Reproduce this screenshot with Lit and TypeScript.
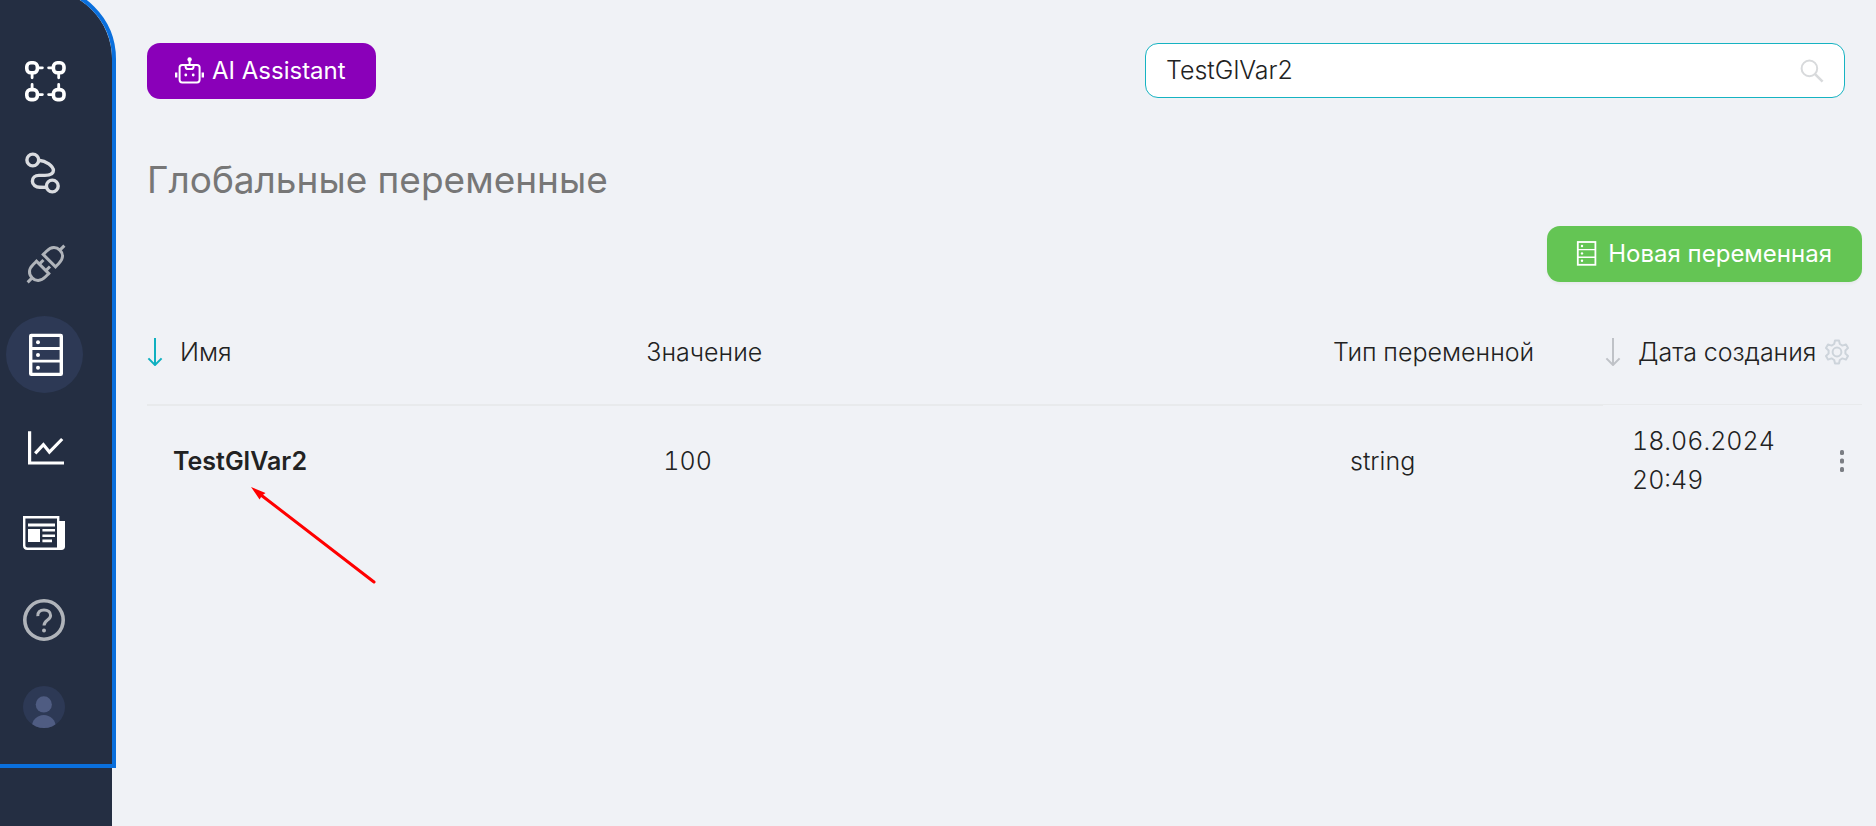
import { LitElement, html, css, svg } from "lit";
import { customElement, property, state } from "lit/decorators.js";
import { classMap } from "lit/directives/class-map.js";

const serverIcon = svg`
  <rect x="9.7" y="4.4" width="30.6" height="39" rx="0.6" fill="none" stroke="currentColor" stroke-width="3.4"></rect>
  <path d="M9 17.5H41M9 30.2H41" fill="none" stroke="currentColor" stroke-width="2.8"></path>
  <circle cx="17" cy="11.2" r="2"></circle>
  <circle cx="17" cy="24" r="2"></circle>
  <circle cx="17" cy="36.8" r="2"></circle>`;

const icons = {
  nodes: svg`
    <g fill="none" stroke="currentColor" stroke-width="3.6" stroke-linecap="round">
      <rect x="5.8" y="4.8" width="10.6" height="10" rx="4"></rect>
      <rect x="32.4" y="4.8" width="10.6" height="10" rx="4"></rect>
      <rect x="5.8" y="31.6" width="10.6" height="10" rx="4"></rect>
      <rect x="32.4" y="31.6" width="10.6" height="10" rx="4"></rect>
    </g>
    <g fill="none" stroke="currentColor" stroke-width="2.8" stroke-linecap="round">
      <path d="M17 9.8H21.4M27.6 9.8H32M17 36.6H21.4M27.6 36.6H32M11.1 16V19.8M37.7 16V19.8M11.1 26.4V31M37.7 26.4V31"></path>
    </g>`,
  route: svg`
    <g fill="none" stroke="currentColor" stroke-width="3.4">
      <circle cx="11.8" cy="11" r="5.9"></circle>
      <circle cx="31.3" cy="37" r="5.9"></circle>
      <path d="M17.8 11.2C25 11.6 32.4 17 32.4 21.6C32.4 25.6 28.4 26.4 24 26.4H18C14 26.4 11.4 28.6 11.4 32.2C11.4 36 15 38.2 18.6 38.2L25.4 38.4"></path>
    </g>`,
  plug: svg`
    <g fill="none" stroke="currentColor" stroke-width="3" transform="translate(25 24) rotate(-45)">
      <path d="M-4.8 -10.2V10.2M-4.8 -8.7H-9.4C-16.4 -8.7 -19.6 -5 -19.6 0C-19.6 5 -16.4 8.7 -9.4 8.7H-4.8M-19.6 0H-26M-4.8 -4.6H1M-4.8 4.6H1"></path>
      <path d="M4.8 -10.2V10.2M4.8 -8.7H9.4C16.4 -8.7 19.6 -5 19.6 0C19.6 5 16.4 8.7 9.4 8.7H4.8M19.6 0H26"></path>
    </g>`,
  server: serverIcon,
  chart: svg`
    <path d="M8.6 8.2V40H43" fill="none" stroke="currentColor" stroke-width="3.2"></path>
    <path d="M14.2 30.4L22.4 21.6L28.4 29L41.2 16" fill="none" stroke="currentColor" stroke-width="3.2"></path>`,
  news: svg`
    <path d="M3.2 7.2H37.2V38.8H6.4Q3.2 38.8 3.2 35.6Z" fill="none" stroke="currentColor" stroke-width="2.4"></path>
    <path d="M37 11H44V36.6Q44 40 40.4 40H37Z"></path>
    <path d="M7 13.6H34V16.4H7ZM7 19H19V32H7ZM21.4 19H34V21.6H21.4ZM21.4 24.4H34V27H21.4ZM21.4 29.6H31V32.2H21.4Z"></path>`,
  help: svg`
    <circle cx="23" cy="23" r="19.2" fill="none" stroke="currentColor" stroke-width="3.6"></circle>
    <path d="M16.8 19.2C16.4 15.2 19 13 23 13C27 13 29.6 15.2 29.6 18.4C29.6 23.2 23 22.8 23 28.6" fill="none" stroke="currentColor" stroke-width="3"></path>
    <circle cx="23" cy="33.4" r="2"></circle>`,
  user: svg`
    <clipPath id="face"><circle cx="23" cy="23" r="21"></circle></clipPath>
    <circle cx="23" cy="23" r="21" fill="#2d3955"></circle>
    <g clip-path="url(#face)" fill="#4f5c82">
      <circle cx="22.8" cy="20.4" r="8.1"></circle>
      <ellipse cx="22.8" cy="43" rx="12" ry="12"></ellipse>
    </g>`,
};

type IconName = keyof typeof icons;

interface NavEntry {
  icon: IconName;
  label: string;
  tone: "bright" | "soft" | "muted";
  active?: boolean;
}

const primary: NavEntry[] = [
  { icon: "nodes", label: "Схемы", tone: "bright" },
  { icon: "route", label: "Маршруты", tone: "soft" },
  { icon: "plug", label: "Подключения", tone: "muted" },
  { icon: "server", label: "Глобальные переменные", tone: "bright", active: true },
];

const secondary: NavEntry[] = [
  { icon: "chart", label: "Статистика", tone: "bright" },
  { icon: "news", label: "Новости", tone: "bright" },
  { icon: "help", label: "Справка", tone: "muted" },
  { icon: "user", label: "Профиль", tone: "bright" },
];

@customElement("side-nav")
export class SideNav extends LitElement {
  static styles = css`
    :host {
      display: block;
      background: #242e42;
      border-top-right-radius: 64px;
    }
    .panel {
      display: flex;
      flex-direction: column;
      gap: 15px;
      margin-top: -11px;
      padding: 54px 0 18px 6px;
      border-top-right-radius: 70px;
      outline: 4px solid #0a6fdc;
      background: #242e42;
    }
    .group {
      display: flex;
      flex-direction: column;
      gap: 14px;
    }
    .tight {
      gap: 10px;
    }
    .item {
      display: flex;
      align-items: center;
      justify-content: center;
      width: 77px;
      height: 77px;
      border-radius: 50%;
      color: #fff;
    }
    .soft {
      color: #dadce0;
    }
    .muted {
      color: #b0b4ba;
    }
    .active {
      background: #2d3955;
    }
    .icon {
      width: 47px;
      height: 47px;
      fill: currentColor;
    }
  `;

  private entry(e: NavEntry) {
    return html`<a
      href="#${e.icon}"
      aria-label=${e.label}
      class=${classMap({ item: true, active: !!e.active, [e.tone]: true })}
      ><svg class="icon" viewBox="0 0 47 47" aria-hidden="true">${icons[e.icon]}</svg></a
    >`;
  }

  render() {
    return html`<nav class="panel">
      <div class="group">${primary.map((e) => this.entry(e))}</div>
      <div class="group tight">${secondary.map((e) => this.entry(e))}</div>
    </nav>`;
  }
}

interface Variable {
  name: string;
  value: string;
  type: string;
  date: string;
  time: string;
}

@customElement("variables-table")
export class VariablesTable extends LitElement {
  @property({ attribute: false }) rows: Variable[] = [];

  static styles = css`
    :host {
      display: block;
    }
    .table {
      width: 100%;
      table-layout: fixed;
      border-collapse: separate;
      border-spacing: 0;
      line-height: 39px;
      font-variant-numeric: tabular-nums;
    }
    .name {
      width: 29%;
    }
    .type {
      width: 270px;
    }
    .created {
      width: 257px;
    }
    .head {
      height: 104px;
      padding: 0 0 0 2px;
      text-align: left;
      font-weight: 300;
      white-space: nowrap;
    }
    .first {
      padding-left: 0;
    }
    .label {
      display: flex;
      align-items: center;
    }
    .sort,
    .gear,
    .more {
      display: flex;
      padding: 0;
      border: 0;
      background: none;
      color: #b9bdc3;
      font: inherit;
    }
    .sort {
      align-items: center;
      color: inherit;
      gap: 17px;
    }
    .arrow {
      width: 16px;
      height: 28px;
      fill: none;
      stroke: #bfc2c7;
      stroke-width: 2;
    }
    .on {
      stroke: #0fb0c0;
    }
    .gear {
      margin-left: 9px;
      color: #cdd4db;
    }
    .gearicon {
      width: 24px;
      height: 26px;
    }
    .cell {
      padding: 17px 0 17px 19px;
      border-top: 2px solid #e8eaec;
    }
    .namecell {
      position: relative;
      padding-left: 26px;
      font-weight: 600;
    }
    .last {
      padding-left: 29px;
      border-top-width: 1px;
    }
    .lastrow {
      display: flex;
      align-items: center;
      justify-content: space-between;
      padding-right: 18px;
    }
    .date {
      width: 150px;
    }
    .more {
      fill: #7b7e84;
    }
    .pointer {
      position: absolute;
      left: 104px;
      top: 81px;
      width: 126px;
      height: 100px;
      pointer-events: none;
    }
  `;

  private arrow(on: boolean) {
    return html`<svg class=${classMap({ arrow: true, on })} viewBox="0 0 16 28" aria-hidden="true">
      <path d="M8 0V27M1.4 20.4L8 27L14.6 20.4"></path>
    </svg>`;
  }

  render() {
    return html`<table class="table">
      <thead>
        <tr>
          <th class="head name first"><button class="sort">${this.arrow(true)}Имя</button></th>
          <th class="head value">Значение</th>
          <th class="head type">Тип переменной</th>
          <th class="head created">
            <div class="label">
              <button class="sort">${this.arrow(false)}Дата создания</button>
              <button class="gear" aria-label="Настройки столбцов">
                <svg class="gearicon" viewBox="0 0 24 26" fill="none" stroke="currentColor" stroke-width="2" stroke-linejoin="round">
                  <path
                    d="M10 1.5H14L14.8 5L17.4 6.6L21 5.4L23 9L20.4 11.4V14.6L23 17L21 20.6L17.4 19.4L14.8 21L14 24.5H10L9.2 21L6.6 19.4L3 20.6L1 17L3.6 14.6V11.4L1 9L3 5.4L6.6 6.6L9.2 5Z"
                  ></path>
                  <circle cx="12" cy="13" r="4.4"></circle>
                </svg>
              </button>
            </div>
          </th>
        </tr>
      </thead>
      <tbody>
        ${this.rows.map(
          (r) => html`<tr>
            <td class="cell namecell">
              ${r.name}
              <svg class="pointer" viewBox="0 0 126 100" aria-hidden="true">
                <path d="M10 8L123 95" stroke="#f00" stroke-width="3" stroke-linecap="round"></path>
                <path d="M0 0L14.5 6L11 8.6L8.6 12.4Z" fill="#f00"></path>
              </svg>
            </td>
            <td class="cell">${r.value}</td>
            <td class="cell">${r.type}</td>
            <td class="cell last">
              <div class="lastrow">
                <span class="date">${r.date} ${r.time}</span>
                <button class="more" aria-label="Действия">
                  <svg width="4" height="22" viewBox="0 0 4 22">
                    <rect width="4" height="5" rx="1.6"></rect>
                    <rect y="8.5" width="4" height="5" rx="1.6"></rect>
                    <rect y="17" width="4" height="5" rx="1.6"></rect>
                  </svg>
                </button>
              </div>
            </td>
          </tr>`
        )}
      </tbody>
    </table>`;
  }
}

@customElement("app-root")
export class AppRoot extends LitElement {
  @state() private query = "TestGlVar2";

  private rows: Variable[] = [
    { name: "TestGlVar2", value: "100", type: "string", date: "18.06.2024", time: "20:49" },
  ];

  static styles = css`
    :host {
      display: grid;
      grid-template-columns: 112px minmax(0, 1fr);
      min-height: 100vh;
      background: #f0f2f6;
      color: #222;
      font: 300 25px/39px Inter, "Noto Sans", sans-serif;
    }
    .main {
      padding: 43px 14px 0 35px;
    }
    .top {
      display: flex;
      justify-content: space-between;
      padding-right: 17px;
    }
    .button {
      display: flex;
      align-items: center;
      height: 56px;
      border: 0;
      border-radius: 13px;
      color: #fff;
      font: inherit;
      font-size: 24px;
      font-weight: 400;
    }
    .ai {
      gap: 8px;
      padding: 0 30px 2px 28px;
      background: #8a00b9;
    }
    .boticon {
      width: 29px;
      height: 27px;
    }
    .search {
      display: flex;
      align-items: center;
      flex: 0 1 700px;
      box-sizing: border-box;
      height: 55px;
      padding: 0 20px;
      border: 1px solid #16b3c2;
      border-radius: 13px;
      background: #fff;
    }
    .query {
      flex: 1;
      min-width: 0;
      padding: 0;
      border: 0;
      outline: 0;
      background: none;
      color: inherit;
      font: inherit;
    }
    .lens {
      width: 24px;
      height: 24px;
      fill: none;
      stroke: #d8dadc;
      stroke-width: 2;
    }
    .title {
      margin: 53px 0 0;
      color: #777;
      font-size: 37px;
      font-weight: 400;
      line-height: 56px;
    }
    .actions {
      display: flex;
      justify-content: flex-end;
      padding: 18px 0;
    }
    .create {
      gap: 11px;
      padding: 0 30px 2px 29px;
      background: #64c554;
      box-shadow: 0 2px 3px rgba(0, 0, 0, 0.04);
    }
    .stack {
      width: 21px;
      height: 25px;
    }
  `;

  render() {
    return html`
      <side-nav></side-nav>
      <main class="main">
        <div class="top">
          <button class="button ai">
            <svg class="boticon" viewBox="0 0 29 27" fill="none" stroke="#fff" stroke-width="2" aria-hidden="true">
              <rect x="4.6" y="8" width="20" height="17.4" rx="2.6"></rect>
              <path d="M14.6 3V8M10.6 8V9.4Q10.6 12 13.2 12H16Q18.6 12 18.6 9.4V8"></path>
              <path d="M1.2 15.4V20.6M27.8 15.4V20.6" stroke-width="2.4"></path>
              <circle cx="14.6" cy="2.4" r="2.2" fill="#fff" stroke="none"></circle>
              <circle cx="10.8" cy="18" r="1.4" fill="#fff" stroke="none"></circle>
              <circle cx="18.2" cy="18" r="1.4" fill="#fff" stroke="none"></circle>
            </svg>
            AI Assistant
          </button>
          <label class="search">
            <input
              class="query"
              type="text"
              aria-label="Поиск"
              .value=${this.query}
              @input=${(e: Event) => (this.query = (e.target as HTMLInputElement).value)}
            />
            <svg class="lens" viewBox="0 0 24 24" aria-hidden="true">
              <circle cx="9.4" cy="9.4" r="7.8"></circle>
              <path d="M14.8 14.8L22.6 22.6" stroke-width="2.6"></path>
            </svg>
          </label>
        </div>
        <h1 class="title">Глобальные переменные</h1>
        <div class="actions">
          <button class="button create">
            <svg class="stack" viewBox="0 0 21 25" fill="none" stroke="#fff" aria-hidden="true">
              <rect x="1.8" y="1" width="17.6" height="22.8" stroke-width="1.8"></rect>
              <path d="M2 8.6H19.4M2 16.2H19.4" stroke-width="1.4"></path>
              <g fill="#fff" stroke="none">
                <circle cx="6" cy="5" r="1.2"></circle>
                <circle cx="6" cy="12.4" r="1.2"></circle>
                <circle cx="6" cy="19.8" r="1.2"></circle>
              </g>
            </svg>
            Новая переменная
          </button>
        </div>
        <variables-table .rows=${this.rows}></variables-table>
      </main>
    `;
  }
}
